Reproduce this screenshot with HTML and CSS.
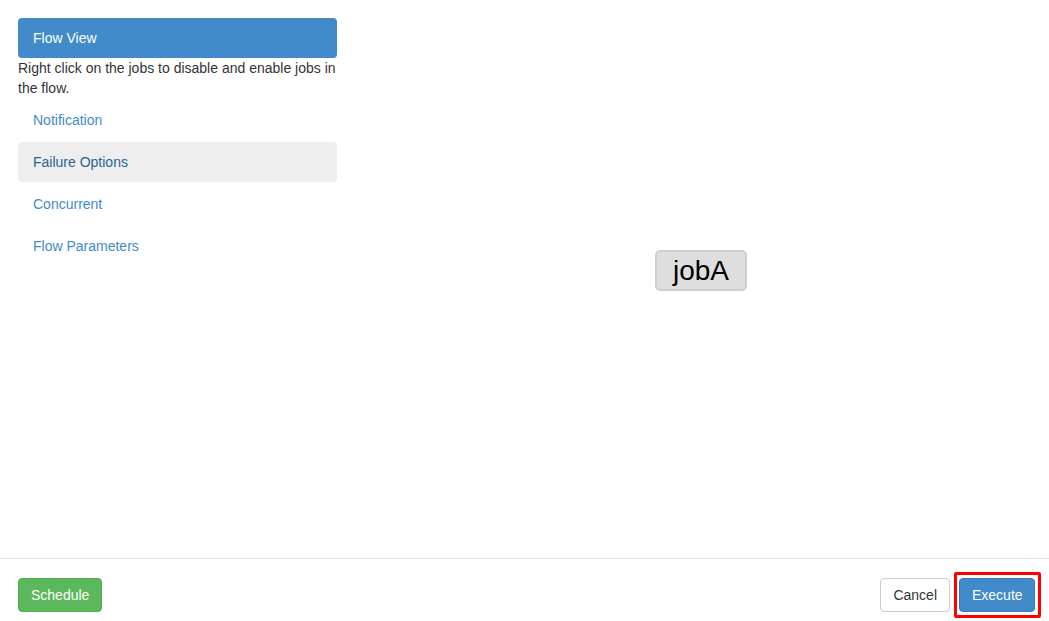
FILE: index.html
```html
<!DOCTYPE html>
<html>
<head>
<meta charset="utf-8">
<link rel="stylesheet" href="styles.css">
</head>
<body>
<div class="page">
  <div class="content">
    <aside class="sidebar">
      <div class="pill active">Flow View</div>
      <p class="hint">Right click on the jobs to disable and enable jobs in the flow.</p>
      <div class="pill link">Notification</div>
      <div class="pill link hover">Failure Options</div>
      <div class="pill link">Concurrent</div>
      <div class="pill link">Flow Parameters</div>
    </aside>
    <main class="canvas">
      <div class="node">jobA</div>
    </main>
  </div>
  <footer class="footer">
    <button class="btn btn-success">Schedule</button>
    <div class="right">
      <button class="btn btn-default">Cancel</button>
      <span class="highlight"><button class="btn btn-primary">Execute</button></span>
    </div>
  </footer>
</div>
</body>
</html>
```

FILE: styles.css
```css
* { box-sizing: border-box; }
html, body { margin: 0; padding: 0; background: #fff; }
body {
  font-family: "Liberation Sans", Arial, sans-serif;
  font-size: 14px;
  line-height: 20px;
  color: #333;
}
.page { width: 1049px; height: 621px; overflow: hidden; }
.content {
  height: 558px;
  display: flex;
  padding: 18px 0 0 18px;
}
.sidebar { width: 319px; flex: none; }
.pill {
  height: 40px;
  padding: 10px 15px;
  border-radius: 4px;
  margin-top: 2px;
}
.pill.active { margin-top: 0; background: #428bca; color: #fff; }
.pill.link { color: #428bca; }
.pill.hover { background: #eee; color: #2a6496; }
.hint { margin: 0; color: #333; }
.canvas { flex: 1; position: relative; }
.node {
  position: absolute;
  left: 318px;
  top: 232px;
  width: 92px;
  height: 41px;
  background: #dedede;
  border: 2px solid #cfcfcf;
  border-radius: 5px;
  font-size: 28px;
  line-height: 37px;
  text-align: center;
  color: #000;
}
.footer {
  border-top: 1px solid #e5e5e5;
  padding: 19px 8px 0 18px;
  display: flex;
  justify-content: space-between;
  align-items: flex-start;
}
.right { display: flex; align-items: flex-start; margin-top: -6px; }
.btn {
  font-family: "Liberation Sans", Arial, sans-serif;
  font-size: 14px;
  line-height: 20px;
  padding: 6px 12px;
  border: 1px solid transparent;
  border-radius: 4px;
  height: 34px;
  cursor: pointer;
}
.btn-success { background: #5cb85c; border-color: #4cae4c; color: #fff; }
.btn-default { background: #fff; border-color: #ccc; color: #333; margin-top: 6px; }
.btn-primary { background: #428bca; border-color: #357ebd; color: #fff; }
.highlight {
  display: block;
  margin-left: 4px;
  border: 3px solid #f00;
  border-radius: 2px;
  padding: 3px 3px 3px 2px;
}
.highlight .btn { display: block; width: 76px; }
```
